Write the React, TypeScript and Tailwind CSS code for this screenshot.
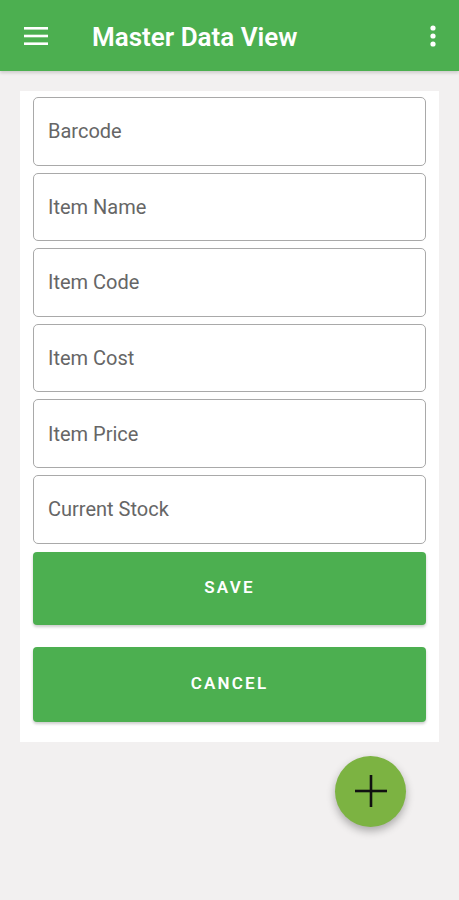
import React from "react";

const fields = ["Barcode", "Item Name", "Item Code", "Item Cost", "Item Price", "Current Stock"];

export default function App() {
  return (
    <div
      className="w-[459px] h-[900px] bg-[#f2f0f0] flex flex-col"
      style={{ fontFamily: "Roboto, 'Noto Sans', sans-serif" }}
    >
      <header className="h-[71px] bg-[#4caf50] flex items-center shadow-[0_2px_3px_rgba(0,0,0,0.15)] shrink-0">
        <div className="w-[92px] pl-[24px] flex items-center">
          <svg width="24" height="20" viewBox="0 0 24 20">
            <rect x="0" y="1" width="24" height="2.6" fill="#fff" />
            <rect x="0" y="8.7" width="24" height="2.6" fill="#fff" />
            <rect x="0" y="16.4" width="24" height="2.6" fill="#fff" />
          </svg>
        </div>
        <div className="flex-1 text-white text-[26px] font-semibold leading-none pt-[2px]">
          Master Data View
        </div>
        <div className="w-[56px] flex justify-center pl-[3px]">
          <svg width="6" height="22" viewBox="0 0 6 22">
            <circle cx="3" cy="3" r="2.6" fill="#fff" />
            <circle cx="3" cy="11" r="2.6" fill="#fff" />
            <circle cx="3" cy="19" r="2.6" fill="#fff" />
          </svg>
        </div>
      </header>

      <main className="px-[20px] pt-[20px]">
        <div className="bg-white px-[13px] pt-[6px] pb-[20px] flex flex-col">
          <div className="flex flex-col gap-[7px]">
            {fields.map((f) => (
              <div
                key={f}
                className="h-[68.6px] border border-[#a9a9a9] rounded-[5px] flex items-center pl-[14px] text-[20px] text-[#666666]"
              >
                {f}
              </div>
            ))}
          </div>
          <button className="mt-[8px] h-[73px] bg-[#4caf50] rounded-[4px] text-white text-[17px] font-semibold tracking-[2.2px] shadow-[0_2px_3px_rgba(0,0,0,0.2)]">
            SAVE
          </button>
          <button className="mt-[22px] h-[75px] bg-[#4caf50] rounded-[4px] text-white text-[17px] font-semibold tracking-[2.2px] shadow-[0_2px_3px_rgba(0,0,0,0.2)]">
            CANCEL
          </button>
        </div>
        <div className="flex justify-end pr-[33px] mt-[14px]">
          <div className="w-[71px] h-[71px] rounded-full bg-[#7cb342] flex items-center justify-center shadow-[0_4px_8px_rgba(0,0,0,0.3)]">
            <svg width="32" height="32" viewBox="0 0 32 32">
              <rect x="14.7" y="0" width="2.6" height="32" fill="#111" />
              <rect x="0" y="14.7" width="32" height="2.6" fill="#111" />
            </svg>
          </div>
        </div>
      </main>
    </div>
  );
}
